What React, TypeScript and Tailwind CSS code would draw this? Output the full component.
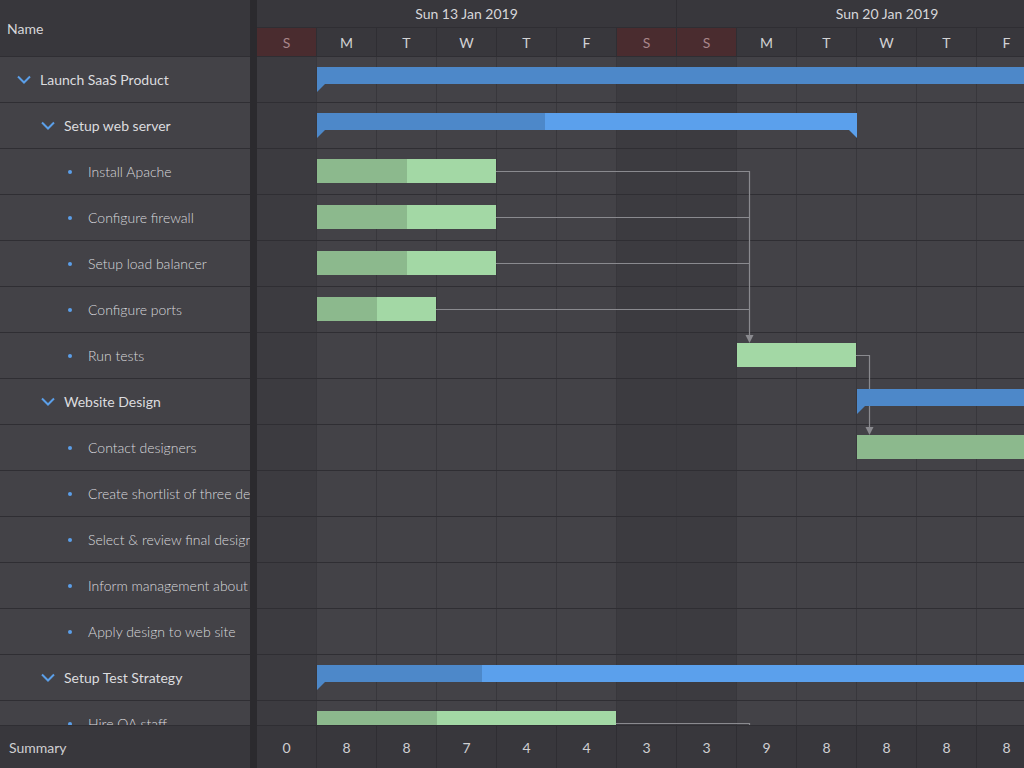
import React from "react";

type Row = {
  name: string;
  level: 0 | 1 | 2;
};

const rows: Row[] = [
  { name: "Launch SaaS Product", level: 0 },
  { name: "Setup web server", level: 1 },
  { name: "Install Apache", level: 2 },
  { name: "Configure firewall", level: 2 },
  { name: "Setup load balancer", level: 2 },
  { name: "Configure ports", level: 2 },
  { name: "Run tests", level: 2 },
  { name: "Website Design", level: 1 },
  { name: "Contact designers", level: 2 },
  { name: "Create shortlist of three designers", level: 2 },
  { name: "Select & review final design", level: 2 },
  { name: "Inform management about decision", level: 2 },
  { name: "Apply design to web site", level: 2 },
  { name: "Setup Test Strategy", level: 1 },
  { name: "Hire QA staff", level: 2 },
];

const days = [
  { d: "S", weekend: true, total: 0 },
  { d: "M", weekend: false, total: 8 },
  { d: "T", weekend: false, total: 8 },
  { d: "W", weekend: false, total: 7 },
  { d: "T", weekend: false, total: 4 },
  { d: "F", weekend: false, total: 4 },
  { d: "S", weekend: true, total: 3 },
  { d: "S", weekend: true, total: 3 },
  { d: "M", weekend: false, total: 9 },
  { d: "T", weekend: false, total: 8 },
  { d: "W", weekend: false, total: 8 },
  { d: "T", weekend: false, total: 8 },
  { d: "F", weekend: false, total: 8 },
];

// bars, coordinates relative to the timeline body
type Bar = {
  kind: "parent" | "task";
  x: number;
  y: number;
  w: number;
  done: number;
  endCap?: boolean;
};

const bars: Bar[] = [
  { kind: "parent", x: 60, y: 10, w: 760, done: 760 },
  { kind: "parent", x: 60, y: 56, w: 540, done: 228, endCap: true },
  { kind: "task", x: 60, y: 102, w: 179, done: 90 },
  { kind: "task", x: 60, y: 148, w: 179, done: 90 },
  { kind: "task", x: 60, y: 194, w: 179, done: 90 },
  { kind: "task", x: 60, y: 240, w: 119, done: 60 },
  { kind: "task", x: 480, y: 286, w: 119, done: 0 },
  { kind: "parent", x: 600, y: 332, w: 220, done: 220 },
  { kind: "task", x: 600, y: 378, w: 220, done: 220 },
  { kind: "parent", x: 60, y: 608, w: 760, done: 165 },
  { kind: "task", x: 60, y: 654, w: 299, done: 120 },
];

function Chevron() {
  return (
    <svg width="14" height="9" viewBox="0 0 14 9" className="shrink-0">
      <polyline
        points="1,1.5 7,7.5 13,1.5"
        fill="none"
        stroke="#5b9fe9"
        strokeWidth="2"
      />
    </svg>
  );
}

function NameRow({ row }: { row: Row }) {
  if (row.level === 2) {
    return (
      <div className="h-[46px] border-b border-[#2f2e33] flex items-center pl-[68px] whitespace-nowrap overflow-hidden">
        <span className="w-[4px] h-[4px] rounded-full bg-[#5b9fe9] shrink-0" />
        <span className="ml-[16px] text-[14px] font-light text-[#d9d9dd]">{row.name}</span>
      </div>
    );
  }
  return (
    <div
      className={
        "h-[46px] border-b border-[#2f2e33] flex items-center whitespace-nowrap overflow-hidden " +
        (row.level === 0 ? "pl-[17px]" : "pl-[41px]")
      }
    >
      <Chevron />
      <span className="ml-[9px] text-[14px] text-[#dcdcdf]">{row.name}</span>
    </div>
  );
}

function GanttBar({ bar }: { bar: Bar }) {
  if (bar.kind === "parent") {
    return (
      <div className="absolute" style={{ left: bar.x, top: bar.y, width: bar.w, height: 25 }}>
        <div className="flex h-[17px]">
          <div className="bg-[#4d88c9] h-full" style={{ width: bar.done }} />
          <div className="bg-[#5ba0ec] h-full flex-1" />
        </div>
        <svg width="8" height="8" className="absolute left-0 top-[17px]">
          <polygon points="0,0 8,0 0,8" fill="#4d88c9" />
        </svg>
        {bar.endCap && (
          <svg width="8" height="8" className="absolute right-0 top-[17px]">
            <polygon points="0,0 8,0 8,8" fill="#5ba0ec" />
          </svg>
        )}
      </div>
    );
  }
  return (
    <div className="absolute flex h-[24px]" style={{ left: bar.x, top: bar.y, width: bar.w }}>
      <div className="bg-[#8cb98d] h-full" style={{ width: bar.done }} />
      <div className="bg-[#a3d8a5] h-full flex-1" />
    </div>
  );
}

function Links() {
  const c = "#8a8a8f";
  return (
    <svg className="absolute left-0 top-0" width="767" height="668">
      <g stroke={c} strokeWidth="1.2" fill="none">
        <polyline points="239,114.5 492.5,114.5 492.5,279" />
        <line x1="239" y1="160.5" x2="492.5" y2="160.5" />
        <line x1="239" y1="206.5" x2="492.5" y2="206.5" />
        <line x1="179" y1="252.5" x2="492.5" y2="252.5" />
        <polyline points="599,298.5 612.5,298.5 612.5,371" />
        <polyline points="359,666.5 492.5,666.5 492.5,700" />
      </g>
      <polygon points="488.5,278 496.5,278 492.5,286" fill={c} />
      <polygon points="608.5,370 616.5,370 612.5,378" fill={c} />
    </svg>
  );
}

export default function App() {
  return (
    <div
      className="w-[1024px] h-[768px] flex bg-[#434247] overflow-hidden select-none"
      style={{ fontFamily: "Lato, 'Open Sans', sans-serif" }}
    >
      {/* names */}
      <div className="w-[250px] shrink-0 flex flex-col">
        <div className="h-[57px] shrink-0 bg-[#38373c] border-b border-[#2f2e33] flex items-center pl-[7px] text-[14px] text-[#d6d6d9]">
          Name
        </div>
        <div className="flex-1 overflow-hidden">
          {rows.map((r) => (
            <NameRow key={r.name} row={r} />
          ))}
        </div>
        <div className="h-[43px] shrink-0 bg-[#38373c] border-t border-[#2f2e33] flex items-center pl-[9px] text-[14px] text-[#cfcfd2]">
          Summary
        </div>
      </div>

      {/* splitter */}
      <div className="w-[7px] shrink-0 bg-[#2b2a2e]" />

      {/* timeline */}
      <div className="flex-1 flex flex-col overflow-hidden">
        <div className="h-[57px] shrink-0 bg-[#38373c] flex flex-col border-b border-[#2f2e33]">
          <div className="h-[28px] flex border-b border-[#2f2e33] text-[14px] text-[#d6d6d9]">
            <div className="w-[420px] shrink-0 flex items-center justify-center border-r border-[#2f2e33]">
              Sun 13 Jan 2019
            </div>
            <div className="w-[420px] shrink-0 flex items-center justify-center">
              Sun 20 Jan 2019
            </div>
          </div>
          <div className="flex-1 flex text-[14px]">
            {days.map((d, i) => (
              <div
                key={i}
                className={
                  "w-[60px] shrink-0 flex items-center justify-center border-r border-[#2f2e33] " +
                  (d.weekend ? "bg-[#4a2c2f] text-[#a9868a]" : "text-[#d2d2d5]")
                }
              >
                {d.d}
              </div>
            ))}
          </div>
        </div>

        <div className="flex-1 relative overflow-hidden">
          <div className="absolute inset-0 flex">
            {days.map((d, i) => (
              <div
                key={i}
                className={
                  "w-[60px] shrink-0 h-full border-r border-[#38373c] " +
                  (d.weekend ? "bg-[#3c3b40]" : "bg-[#434247]")
                }
              />
            ))}
          </div>
          <div className="absolute inset-0">
            {rows.map((r) => (
              <div key={r.name} className="h-[46px] border-b border-[#2f2e33]" />
            ))}
          </div>
          <Links />
          {bars.map((b, i) => (
            <GanttBar key={i} bar={b} />
          ))}
        </div>

        <div className="h-[43px] shrink-0 bg-[#38373c] border-t border-[#2f2e33] flex text-[14px] text-[#cfcfd2]">
          {days.map((d, i) => (
            <div
              key={i}
              className="w-[60px] shrink-0 flex items-center justify-center border-r border-[#2f2e33]"
            >
              {d.total}
            </div>
          ))}
        </div>
      </div>
    </div>
  );
}
